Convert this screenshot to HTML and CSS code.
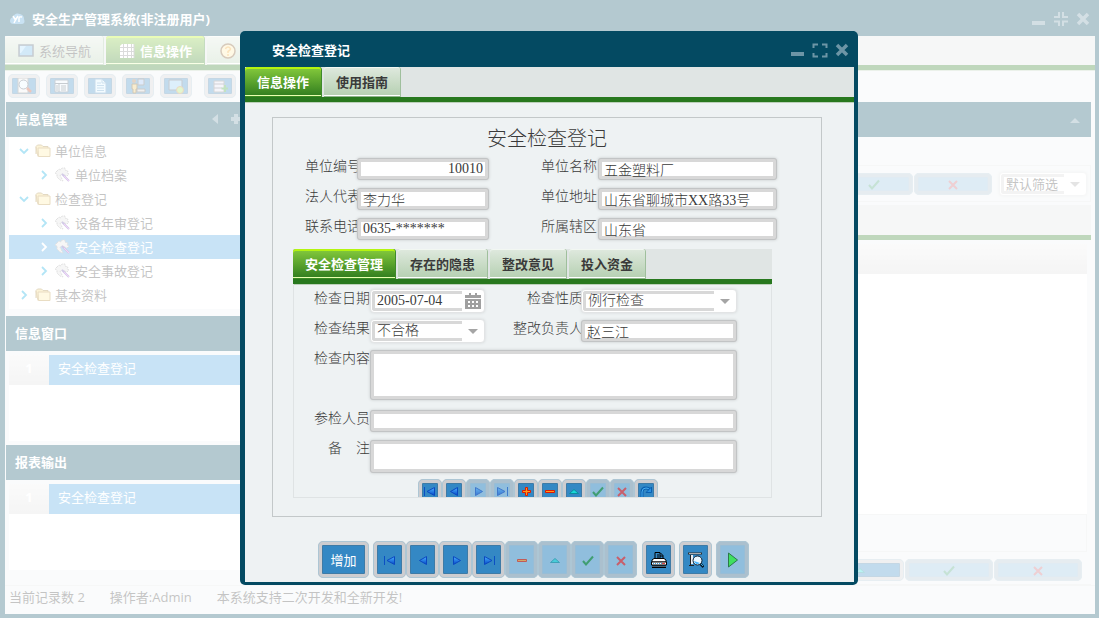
FILE: index.html
```
<!DOCTYPE html>
<html lang="zh-CN">
<head>
  <meta charset="UTF-8" />
  <meta name="viewport" content="width=device-width, initial-scale=1.0"/>
  <title>安全生产管理系统</title>
  <link rel="stylesheet" href="styles.css">
</head>
<body>

  <!-- icon sprites -->
  <svg class="sprites" aria-hidden="true">
    <linearGradient id="blue" x1="0" y1="0" x2="0" y2="1">
      <stop offset="0" stop-color="#4fb4ff"/><stop offset="1" stop-color="#0048c8"/>
    </linearGradient>
    <symbol id="i-first" viewBox="0 0 16 16"><path d="M2.500 4v9" stroke="#0b4fc4" fill="none"/><path d="M12.500 4.500v8l-7.500-4z" fill="url(#blue)" stroke="#0b48c0"/></symbol>
    <symbol id="i-prev" viewBox="0 0 16 16"><path d="M11.500 4.500v8l-7-4z" fill="url(#blue)" stroke="#0b48c0"/></symbol>
    <symbol id="i-next" viewBox="0 0 16 16"><path d="M5.500 4.500v8l7-4z" fill="url(#blue)" stroke="#0b48c0"/></symbol>
    <symbol id="i-last" viewBox="0 0 16 16"><path d="M13.500 4v9" stroke="#0b4fc4" fill="none"/><path d="M3.500 4.500v8l7.500-4z" fill="url(#blue)" stroke="#0b48c0"/></symbol>
    <symbol id="i-add" viewBox="0 0 16 16"><path d="M7.500 4.500h2v3h3v2h-3v3h-2v-3h-3v-2h3z" fill="#ff9a1a" stroke="#e01a00"/></symbol>
    <symbol id="i-minus" viewBox="0 0 16 16"><path d="M3.500 7.500h9v2h-9z" fill="#ff9a1a" stroke="#e01a00"/></symbol>
    <symbol id="i-up" viewBox="0 0 16 16"><path d="M3.500 10.500h9l-4.500-4z" fill="#19d8d8" stroke="#0a8f9f"/></symbol>
    <symbol id="i-check" viewBox="0 0 16 16"><path d="M3 9l3 3.500L13 4.500" fill="none" stroke="#0c8a2c" stroke-width="2"/></symbol>
    <symbol id="i-cross" viewBox="0 0 16 16"><path d="M4 5l8 8M12 5l-8 8" fill="none" stroke="#ee2020" stroke-width="2"/></symbol>
    <symbol id="i-refresh" viewBox="0 0 16 16"><path d="M4 14V9q0-4 4-4 3 0 4 2" fill="none" stroke="#0a5fb0" stroke-width="3"/><path d="M4 14V9q0-4 4-4 3 0 4 2" fill="none" stroke="#4bb0f0"/><path d="M8 9.500h5.500V4z" fill="#2a8fe0" stroke="#0a5fb0"/></symbol>
    <symbol id="i-play" viewBox="0 0 16 16"><path d="M3.500 1v14L12.500 8z" fill="#3fe060" stroke="#2b7a4a"/></symbol>
    <symbol id="i-print" viewBox="0 0 16 16"><path d="M4 7V.5h5L12 3.500V7" fill="#3488c4" stroke="#000"/><path d="M6 3h2M6 5h4M9 1v3h3" stroke="#000" fill="none"/><path d="M1 8l2-1.500h10L15 8v2H1z" fill="#fff" stroke="#000"/><path d="M.5 10h15v3H.5z" fill="#fff" stroke="#000"/><path d="M2 11.500h9" stroke="#38a0e0" stroke-dasharray="1 1"/><path d="M11 11.500h3" stroke="#e04040"/><path d="M1 15h14" stroke="#fff"/><path d="M1 14h14M1 15.500h14" stroke="#000"/></symbol>
    <symbol id="i-preview" viewBox="0 0 16 16"><path d="M0 1.500h14" stroke="#303030" stroke-width="2"/><path d="M1 1.500h12" stroke="#aaa"/><path d="M2.500 3v10M1 13.500h5" stroke="#222" fill="none"/><path d="M4 3v9" stroke="#e8eef4" stroke-width="2"/><circle cx="9.500" cy="8.500" r="4.500" fill="#eaf7ff" stroke="#123"/><path d="M6 9a3.500 3.500 0 0 0 6 2z" fill="#45b5ff"/><path d="M12.500 12l3 3" stroke="#0a1a2a" stroke-width="2.500"/><path d="M13 12l2 2" stroke="#35b0e8"/></symbol>

    <symbol id="i-chev-r" viewBox="0 0 10 10"><path d="M3 1l4 4-4 4" fill="none" stroke="currentColor" stroke-width="1.800"/></symbol>
    <symbol id="i-chev-d" viewBox="0 0 10 10"><path d="M1 3l4 4 4-4" fill="none" stroke="currentColor" stroke-width="1.800"/></symbol>
    <symbol id="i-folder" viewBox="0 0 16 16"><path d="M1 11V3.500L2.500 2h4L8 3.500h5v1.500" fill="#f5d878" stroke="#a08038"/><path d="M3 5h12v8.500H3.500z" fill="#ffe9a0" stroke="#b58c38"/><path d="M1 4l2 9.500" stroke="#b58c38" fill="none"/></symbol>
    <symbol id="i-gear" viewBox="0 0 16 16"><path d="M2 4l2-2 2 1 1-2 3 0 0 2 3 1-1 2 2 1-2 2-5-2-2 1 3 6-3-1-3-3 0-3-2-1z" fill="#e0e0e0" stroke="#999" stroke-dasharray="2 1"/><path d="M7 7l7 7" stroke="#6a4fb0" stroke-width="2"/><path d="M9 9l5 5" stroke="#d36ae8"/></symbol>

    <symbol id="i-min" viewBox="0 0 16 16"><path d="M1 12h13" stroke="currentColor" stroke-width="4"/></symbol>
    <symbol id="i-max" viewBox="0 0 16 16"><path d="M1.500 6V2.500H6M10 2.500h4.500V6M14.500 11v3.500H10M6 14.500H1.500V11" fill="none" stroke="currentColor" stroke-width="2"/></symbol>
    <symbol id="i-restore" viewBox="0 0 16 16"><path d="M1 6h5V1M10 1v5h5M15 10.500h-5v4.500M6 15v-4.500H1" fill="none" stroke="currentColor" stroke-width="2"/></symbol>
    <symbol id="i-close" viewBox="0 0 16 16"><path d="M3 3l10 10M13 3L3 13" stroke="currentColor" stroke-width="3.500"/></symbol>
  </svg>

  <div class="app">
    <header class="titlebar app-title">
      <svg class="logo" viewBox="0 0 16 14"><path d="M4 12q-4 0-4-3t3-4q2-5 7-3 4 1 4 5 2 5-3 5z" fill="#4a9fd8"/><path d="M3 4l2.500 4L8 4M5.500 8L4 11M9 10V6q0-1.500 3-1" stroke="#fff" stroke-width="1.500" fill="none"/></svg>
      <h1>安全生产管理系统(非注册用户)</h1>
      <div class="win-btns">
        <button aria-label="最小化"><svg><use href="#i-min"/></svg></button>
        <button aria-label="还原"><svg><use href="#i-restore"/></svg></button>
        <button aria-label="关闭"><svg><use href="#i-close"/></svg></button>
      </div>
    </header>

    <nav class="tabs nav-tabs">
      <button class="tab">
        <svg viewBox="0 0 16 16"><path d="M1 2h14v11H1z" fill="#68b4e8" stroke="#456" stroke-width="1.500"/><path d="M2 3h6L3 10H2z" fill="#a8dcff"/></svg>系统导航</button>
      <button class="tab active">
        <svg viewBox="0 0 16 16"><path d="M3 1h12v14H1V3z" fill="#fff"/><path d="M1 4.500h14M1 8.500h14M1 12.500h14M4.500 1v14M8.500 1v14M12.500 1v14M15 1v14" stroke="#888"/></svg>信息操作</button>
      <button class="tab">
        <svg viewBox="0 0 16 16"><circle cx="8" cy="8" r="7" fill="#ffe9a8" stroke="#7a5020" stroke-width="1.500"/><path d="M5.500 6q.5-2 2.500-2t2.500 2q0 1-2.500 2.500V10M8 11v2" fill="none" stroke="#f0a020" stroke-width="1.500"/></svg>帮助</button>
    </nav>

    <div class="toolbar">
      <button class="btn tool" aria-label="查询"><svg viewBox="0 0 16 16"><path d="M2 0h10v15H2z" fill="#eee" stroke="#777"/><circle cx="7.500" cy="6.500" r="4.500" fill="#e8f8ff" stroke="#456"/><path d="M11 10l4 4" stroke="#c04020" stroke-width="2.500"/></svg></button>
      <button class="btn tool" aria-label="列表"><svg viewBox="0 0 16 16"><path d="M1 2h13v12H1z" fill="#e8f2fa" stroke="#567"/><path d="M1 5.500h13M5 5v9M7 8h5M7 10h5M7 12h5M2 8h2M2 10h2M2 12h2" stroke="#456"/></svg></button>
      <button class="btn tool" aria-label="文档"><svg viewBox="0 0 16 16"><path d="M3 1h7l4 4v10H3z" fill="#d8f0ff" stroke="#4a88b8"/><path d="M5 5h4M5 7.500h7M5 10h7M5 12.500h7M10 1v4h4" stroke="#5a9cc8" fill="none"/></svg></button>
      <button class="btn tool" aria-label="用户"><svg viewBox="0 0 16 16"><path d="M8 1h6v6H8z" fill="#8fb8f0" stroke="#555"/><path d="M7 11h8v3H7z" fill="#ccc" stroke="#555"/><circle cx="4" cy="3" r="2" fill="#a07040"/><path d="M2 6h5v5H6v4H3v-4H2z" fill="#e8c060" stroke="#6a4a10"/></svg></button>
      <button class="btn tool" aria-label="窗口"><svg viewBox="0 0 16 16"><path d="M1 2h13v10H1z" fill="#8cc8f0" stroke="#456"/><circle cx="12" cy="12" r="3.500" fill="#a0e060" stroke="#c08030"/></svg></button>
      <span class="sep"></span>
      <button class="btn tool" aria-label="导入"><svg viewBox="0 0 16 16"><path d="M2 3h10v11H2z" fill="#dde" stroke="#777"/><path d="M2 6h10M2 10h8" stroke="#667"/><path d="M13 7v7M9.500 10.500h7" stroke="#35a035" stroke-width="2"/></svg></button>
      <button class="btn tool" aria-label="导出"></button>
    </div>

    <div class="work">
      <aside class="sidebar">
        <section class="panel grow">
          <h2>信息管理
            <span class="head-icons">
              <svg viewBox="0 0 12 12"><path d="M8 1v10L2 6z" fill="currentColor"/></svg>
              <svg viewBox="0 0 12 12"><path d="M6 1v10M1 6h10" stroke="currentColor" stroke-width="4"/></svg>
            </span>
          </h2>
          <ul class="tree">
            <li><svg class="chev"><use href="#i-chev-d"/></svg><svg><use href="#i-folder"/></svg>单位信息</li>
            <li class="child"><svg class="chev"><use href="#i-chev-r"/></svg><svg><use href="#i-gear"/></svg>单位档案</li>
            <li><svg class="chev"><use href="#i-chev-d"/></svg><svg><use href="#i-folder"/></svg>检查登记</li>
            <li class="child"><svg class="chev"><use href="#i-chev-r"/></svg><svg><use href="#i-gear"/></svg>设备年审登记</li>
            <li class="child selected"><svg class="chev"><use href="#i-chev-r"/></svg><svg><use href="#i-gear"/></svg>安全检查登记</li>
            <li class="child"><svg class="chev"><use href="#i-chev-r"/></svg><svg><use href="#i-gear"/></svg>安全事故登记</li>
            <li><svg class="chev"><use href="#i-chev-r"/></svg><svg><use href="#i-folder"/></svg>基本资料</li>
          </ul>
        </section>
        <section class="panel">
          <h2>信息窗口</h2>
          <div class="list"><div class="list-row"><b>1</b><span>安全检查登记</span></div></div>
        </section>
        <section class="panel last">
          <h2>报表输出</h2>
          <div class="list"><div class="list-row"><b>1</b><span>安全检查登记</span></div></div>
        </section>
      </aside>

      <main class="main">
        <div class="main-head"><svg viewBox="0 0 12 12"><path d="M1 9h10L6 4z" fill="currentColor"/></svg></div>
        <div class="filter-bar">
          <button class="btn wide" disabled aria-label="保存"><svg><use href="#i-check"/></svg></button>
          <button class="btn wide" disabled aria-label="取消"><svg><use href="#i-cross"/></svg></button>
          <div class="combo filter">
            <select aria-label="筛选"><option>默认筛选</option></select>
            <svg viewBox="0 0 16 16"><path d="M3 6h10l-5 5z" fill="#a5a5a5"/></svg>
          </div>
        </div>
        <div class="strip"></div>
        <div class="grid-view">
          <div class="grid-head"></div>
          <div class="grid-body"></div>
          <div class="grid-foot"></div>
        </div>
        <div class="grid-btns">
          <button class="btn" aria-label="编辑"><svg><use href="#i-up"/></svg></button>
          <button class="btn" disabled aria-label="保存"><svg><use href="#i-check"/></svg></button>
          <button class="btn" disabled aria-label="取消"><svg><use href="#i-cross"/></svg></button>
        </div>
      </main>
    </div>

    <footer class="status">
      <span>当前记录数 2</span>
      <span>操作者:Admin</span>
      <span>本系统支持二次开发和全新开发!</span>
    </footer>
  </div>

  <div class="mask"></div>

  <div class="dialog" role="dialog" aria-labelledby="dlgTitle">
    <header class="titlebar">
      <h1 id="dlgTitle">安全检查登记</h1>
      <div class="win-btns">
        <button aria-label="最小化"><svg><use href="#i-min"/></svg></button>
        <button aria-label="最大化"><svg><use href="#i-max"/></svg></button>
        <button aria-label="关闭"><svg><use href="#i-close"/></svg></button>
      </div>
    </header>
    <div class="dialog-body">
      <div class="tabs">
        <button class="tab active">信息操作</button>
        <button class="tab">使用指南</button>
      </div>

      <form class="sheet">
        <h2>安全检查登记</h2>
        <div class="row">
          <div class="field left"><label for="unitNo">单位编号</label><input id="unitNo" class="num" value="10010"></div>
          <div class="field right"><label for="unitName">单位名称</label><input id="unitName" value="五金塑料厂"></div>
        </div>
        <div class="row">
          <div class="field left"><label for="legal">法人代表</label><input id="legal" value="李力华"></div>
          <div class="field right"><label for="addr">单位地址</label><input id="addr" value="山东省聊城市XX路33号"></div>
        </div>
        <div class="row">
          <div class="field left"><label for="tel">联系电话</label><input id="tel" value="0635-*******"></div>
          <div class="field right"><label for="area">所属辖区</label><input id="area" value="山东省"></div>
        </div>

        <div class="sub">
          <div class="tabs">
            <button type="button" class="tab active">安全检查管理</button>
            <button type="button" class="tab">存在的隐患</button>
            <button type="button" class="tab">整改意见</button>
            <button type="button" class="tab">投入资金</button>
          </div>
          <div class="sub-panel">
            <div class="row split">
              <div class="field"><label for="date">检查日期</label>
                <div class="combo short">
                  <input id="date" value="2005-07-04">
                  <svg viewBox="0 0 16 16"><path d="M4 0h2v2h4V0h2v2h4v3H0V2h4zM0 6h16v10H0z" fill="#a0a0a0"/><path d="M3 9h2M7 9h2M11 9h2M3 13h2M7 13h2M11 13h2" stroke="#fff" stroke-width="2"/></svg>
                </div>
              </div>
              <div class="field tight"><label for="kind">检查性质</label>
                <div class="combo">
                  <select id="kind"><option>例行检查</option></select>
                  <svg viewBox="0 0 16 16"><path d="M3 6h10l-5 5z" fill="#a5a5a5"/></svg>
                </div>
              </div>
            </div>
            <div class="row split">
              <div class="field"><label for="result">检查结果</label>
                <div class="combo short">
                  <select id="result"><option>不合格</option></select>
                  <svg viewBox="0 0 16 16"><path d="M3 6h10l-5 5z" fill="#a5a5a5"/></svg>
                </div>
              </div>
              <div class="field tight"><label for="owner">整改负责人</label><input id="owner" value="赵三江"></div>
            </div>
            <div class="row tall"><div class="field full"><label for="content">检查内容</label><textarea id="content"></textarea></div></div>
            <div class="row"><div class="field full"><label for="people">参检人员</label><input id="people"></div></div>
            <div class="row note"><div class="field full"><label for="note">备　注</label><textarea id="note"></textarea></div></div>
            <div class="mini-bar">
              <button type="button" class="btn" aria-label="首条"><svg><use href="#i-first"/></svg></button>
              <button type="button" class="btn" aria-label="上一条"><svg><use href="#i-prev"/></svg></button>
              <button type="button" class="btn" disabled aria-label="下一条"><svg><use href="#i-next"/></svg></button>
              <button type="button" class="btn" disabled aria-label="末条"><svg><use href="#i-last"/></svg></button>
              <button type="button" class="btn" aria-label="新增"><svg><use href="#i-add"/></svg></button>
              <button type="button" class="btn" aria-label="删除"><svg><use href="#i-minus"/></svg></button>
              <button type="button" class="btn" aria-label="编辑"><svg><use href="#i-up"/></svg></button>
              <button type="button" class="btn" disabled aria-label="保存"><svg><use href="#i-check"/></svg></button>
              <button type="button" class="btn" disabled aria-label="取消"><svg><use href="#i-cross"/></svg></button>
              <button type="button" class="btn" aria-label="刷新"><svg><use href="#i-refresh"/></svg></button>
            </div>
          </div>
        </div>
      </form>

      <div class="actions">
        <button class="btn add">增加</button>
        <div class="group">
          <button class="btn" aria-label="首条"><svg><use href="#i-first"/></svg></button>
          <button class="btn" aria-label="上一条"><svg><use href="#i-prev"/></svg></button>
          <button class="btn" aria-label="下一条"><svg><use href="#i-next"/></svg></button>
          <button class="btn" aria-label="末条"><svg><use href="#i-last"/></svg></button>
          <button class="btn" disabled aria-label="删除"><svg><use href="#i-minus"/></svg></button>
          <button class="btn" disabled aria-label="编辑"><svg><use href="#i-up"/></svg></button>
          <button class="btn" disabled aria-label="保存"><svg><use href="#i-check"/></svg></button>
          <button class="btn" disabled aria-label="取消"><svg><use href="#i-cross"/></svg></button>
        </div>
        <button class="btn" aria-label="打印"><svg><use href="#i-print"/></svg></button>
        <button class="btn" aria-label="预览"><svg><use href="#i-preview"/></svg></button>
        <button class="btn play" disabled aria-label="执行"><svg><use href="#i-play"/></svg></button>
      </div>
    </div>
  </div>

</body>
</html>
```
FILE: styles.css
```
* {
  box-sizing: border-box;
}

body {
  margin: 0;
  background: #044a62;
  color: #3a3a3a;
  font: 13px/18px "Open Sans", "Noto Sans CJK SC", sans-serif;
  overflow: hidden;
}

h1, h2, ul {
  margin: 0;
  padding: 0;
  font-size: 13px;
  font-weight: bold;
}

button, input, select, textarea {
  margin: 0;
  font: inherit;
  color: inherit;
}

svg {
  display: block;
  flex: none;
  width: 16px;
  height: 16px;
}

.sprites {
  position: absolute;
  width: 0;
  height: 0;
}

/* main window */
.app {
  display: flex;
  flex-direction: column;
  height: 100vh;
  border: solid #044a62;
  border-width: 0 4px 4px 5px;
  background: #eef2f3;
}

.titlebar {
  display: flex;
  align-items: center;
  height: 36px;
  color: #fff;
  background: #044a62;
}

.app-title {
  padding: 2px 4px 0 5px;
  gap: 6px;
}

.logo {
  height: 14px;
}

.win-btns {
  display: flex;
  gap: 6px;
  margin-left: auto;
}

.win-btns button {
  padding: 0;
  border: 0;
  background: none;
  color: #6d95a6;
}

/* tabs */
.tabs {
  display: flex;
  gap: 2px;
  height: 35px;
  background: #e0e5e4;
  border-bottom: 5px solid #28781e;
  box-shadow: 0 1px 0 #bcd0ba;
}

.tab {
  display: flex;
  align-items: center;
  gap: 5px;
  padding: 0 12px;
  border: 0;
  border-right: 1px solid #9fbf9c;
  border-radius: 3px 3px 0 0;
  background: linear-gradient(#dfe9de, #b4cfb0);
  box-shadow: inset 0 1px 0 #f2f7f2, inset 0 -1px 0 #8fb58c, inset 0 -2px 0 #fff;
  font-weight: bold;
  white-space: nowrap;
}

.tab.active {
  color: #fff;
  border-right-color: #3f8a2c;
  background: linear-gradient(#86cb3c, #2e7b1e);
  box-shadow: inset 0 2px 0 #b4f410, inset 0 -1px 0 #3a8c22, inset 0 -2px 0 #eaffb0;
}

.nav-tabs {
  flex: none;
  height: 34px;
}

.nav-tabs .tab {
  font-weight: normal;
  padding-left: 13px;
}

.nav-tabs .tab.active {
  font-weight: bold;
}

/* buttons */
.btn {
  display: flex;
  align-items: center;
  justify-content: center;
  width: 33px;
  height: 37px;
  padding: 0;
  border: 4px solid #cdcdd0;
  border-radius: 5px;
  background: #3488c4;
  box-shadow: inset 0 0 0 1px #3f7ba6;
  outline: 1px solid #adc6d4;
  outline-offset: -1px;
  color: #fff;
}

.btn:disabled {
  border-color: #abc0ce;
  background: #90bedd;
  box-shadow: inset 0 0 0 1px #98bdd6;
}

.btn:disabled svg {
  opacity: .6;
}

.toolbar {
  display: flex;
  flex: none;
  align-items: center;
  gap: 6px;
  height: 32px;
  padding-left: 3px;
}

.tool {
  width: 32px;
  height: 24px;
}

.sep {
  width: 0;
}

/* sidebar */
.work {
  display: flex;
  flex: 1;
  min-height: 0;
}

.sidebar {
  display: flex;
  flex-direction: column;
  width: 240px;
  margin-left: 1px;
}

.panel {
  height: 129px;
}

.panel.grow {
  flex: 1;
}

.panel.last {
  height: 140px;
}

.panel h2 {
  display: flex;
  align-items: center;
  height: 35px;
  padding: 0 0 2px 9px;
  background: #044a62;
  color: #fff;
}

.head-icons {
  display: flex;
  gap: 8px;
  margin-left: auto;
  padding-right: 4px;
  color: #6d95a6;
}

.head-icons svg {
  width: 12px;
  height: 12px;
}

.tree {
  height: 172px;
  margin-left: 3px;
  padding-top: 2px;
  background: #fff;
  font-weight: normal;
  list-style: none;
}

.tree li {
  display: flex;
  align-items: center;
  gap: 4px;
  height: 24px;
  padding-left: 10px;
}

.tree li.child {
  padding-left: 30px;
}

.tree .chev {
  width: 10px;
  height: 10px;
  margin-right: 2px;
  color: #00a8e0;
}

.tree li.selected,
.tree li.selected .chev {
  color: #fff;
}

.tree li.selected {
  background: #48a2e1;
}

.list {
  height: 86px;
  margin: 4px 0 0 3px;
  background: #fff;
}

.list-row {
  display: flex;
  height: 30px;
  line-height: 26px;
  background: #48a2e1;
  color: #fff;
}

.list-row b {
  width: 40px;
  text-align: center;
  background: linear-gradient(#f0f0f0, #dcdcdc);
}

.list-row span {
  padding-left: 9px;
}

/* record list on the right */
.main {
  display: flex;
  flex: 1;
  flex-direction: column;
  margin: 0 4px 0 3px;
}

.main-head {
  display: flex;
  align-items: center;
  justify-content: flex-end;
  height: 35px;
  padding-right: 10px;
  background: #044a62;
  color: #6d95a6;
}

.main-head svg {
  width: 12px;
  height: 12px;
}

.filter-bar {
  display: flex;
  align-items: center;
  justify-content: flex-end;
  gap: 1px;
  height: 37px;
  margin-top: 28px;
  padding: 1px 3px 0 0;
  border: 1px solid #dfe3e4;
}

.wide {
  width: 78px;
  height: 22px;
}

.filter {
  width: 88px;
  margin-left: 6px;
}

.strip {
  height: 35px;
  margin-top: 3px;
  background: #e0e5e4;
  border-bottom: 5px solid #28781e;
}

.grid-view {
  display: flex;
  flex: 1;
  flex-direction: column;
  margin: 4px 4px 0 0;
}

.grid-head {
  height: 30px;
  background: linear-gradient(#f0f0f0, #dcdcdc);
}

.grid-body {
  flex: 1;
  background: #fff;
}

.grid-foot {
  height: 38px;
  border: solid #dfe3e4;
  border-width: 1px 1px 1px 0;
}

.grid-btns {
  display: flex;
  justify-content: flex-end;
  gap: 1px;
  padding: 7px 9px 3px;
  border-bottom: 1px solid #dfe3e4;
}

.grid-btns .btn {
  width: 88px;
  height: 22px;
}

.status {
  display: flex;
  gap: 25px;
  flex: none;
  height: 29px;
  padding: 2px 4px 0;
  border-top: 1px solid #dfe3e4;
}

/* the window below is greyed out while the dialog is open */
.mask {
  position: fixed;
  inset: 0;
  background: rgba(255, 255, 255, .7);
}

.dialog {
  position: absolute;
  top: 31px;
  left: 240px;
  width: 618px;
  padding: 0 4px 3px 5px;
  border-radius: 5px;
  background: #044a62;
}

.dialog .titlebar {
  padding: 1px 4px 0 27px;
}

.dialog-body {
  background: #eef2f3;
}

.sheet {
  margin: 15px 32px 0 27px;
  border: 1px solid #c3c8c9;
  padding-bottom: 18px;
  font-family: "Liberation Serif", "Noto Sans CJK SC", sans-serif;
  font-size: 14px;
  font-weight: 300;
}

.sheet h2 {
  padding-top: 3px;
  font-size: 20px;
  line-height: 36px;
  font-weight: 300;
  text-align: center;
}

.row {
  display: flex;
  gap: 52px;
  height: 30px;
  padding-left: 32px;
}

.field {
  display: flex;
  align-items: flex-start;
}

.field label {
  flex: none;
  line-height: 20px;
  white-space: nowrap;
}

.field > input,
.field > textarea,
.field > .combo {
  position: relative;
  margin-top: 1px;
}

.field > input,
.field > textarea {
  min-width: 0;
  height: 22px;
  padding: 0 6px;
  border: 0;
  border-radius: 3px;
  background: #fff;
  box-shadow: inset 0 0 0 1px #c2c4c5, inset 0 0 0 4px #d8d8d8, 0 0 3px #c4c8ca;
  resize: none;
}

.left label {
  width: 52px;
}

.left input {
  width: 132px;
}

.right label {
  width: 57px;
}

.right input {
  width: 179px;
}

.num {
  text-align: right;
}

.sub {
  margin: 2px 49px 0 20px;
}

.sub .tab {
  font-family: "Open Sans", "Noto Sans CJK SC", sans-serif;
  font-size: 13px;
}

.sub-panel {
  height: 214px;
  padding: 5px 34px 0 20px;
  border: 1px solid #dfe3e4;
  border-top: 0;
  overflow: hidden;
}

.sub-panel .row {
  gap: 0;
  padding-left: 0;
}

.split {
  justify-content: space-between;
}

.sub-panel .tall {
  height: 60px;
}

.sub-panel .note {
  height: 40px;
}

.full {
  flex: 1;
}

.full label {
  width: 56px;
  text-align: right;
}

.full input,
.full textarea {
  flex: 1;
}

.tall textarea {
  height: 50px;
}

.note textarea {
  height: 33px;
}

.tight label {
  margin-right: -2px;
}

.tight input,
.tight .combo {
  width: 156px;
}

.combo {
  display: flex;
  align-items: center;
  height: 24px;
  padding-right: 3px;
  border: 1px solid #e2e4e5;
  border-radius: 4px;
  background: #fff;
  box-shadow: 0 0 3px #d4d8da;
}

.combo input,
.combo select {
  flex: 1;
  min-width: 0;
  height: 20px;
  margin-left: 1px;
  padding: 0 5px;
  border: 0;
  border-radius: 3px 0 0 3px;
  background: #fff;
  box-shadow: inset 3px 0 0 #d8d8d8, inset 0 3px 0 #d8d8d8, inset 0 -3px 0 #d8d8d8;
  appearance: none;
}

.combo select {
  padding-right: 0;
}

.combo svg {
  margin-left: 3px;
}

.field > .combo {
  margin-top: 0;
}

.short {
  width: 115px;
}

.mini-bar {
  display: flex;
  margin-left: 104px;
}

.mini-bar .btn {
  flex: none;
  width: 24px;
  height: 24px;
}

.actions {
  display: flex;
  gap: 4px;
  padding: 24px 0 4px 73px;
}

.group {
  display: flex;
  margin-right: 1px;
}

.actions .add {
  width: 51px;
}

.play:disabled svg {
  opacity: 1;
}
```
